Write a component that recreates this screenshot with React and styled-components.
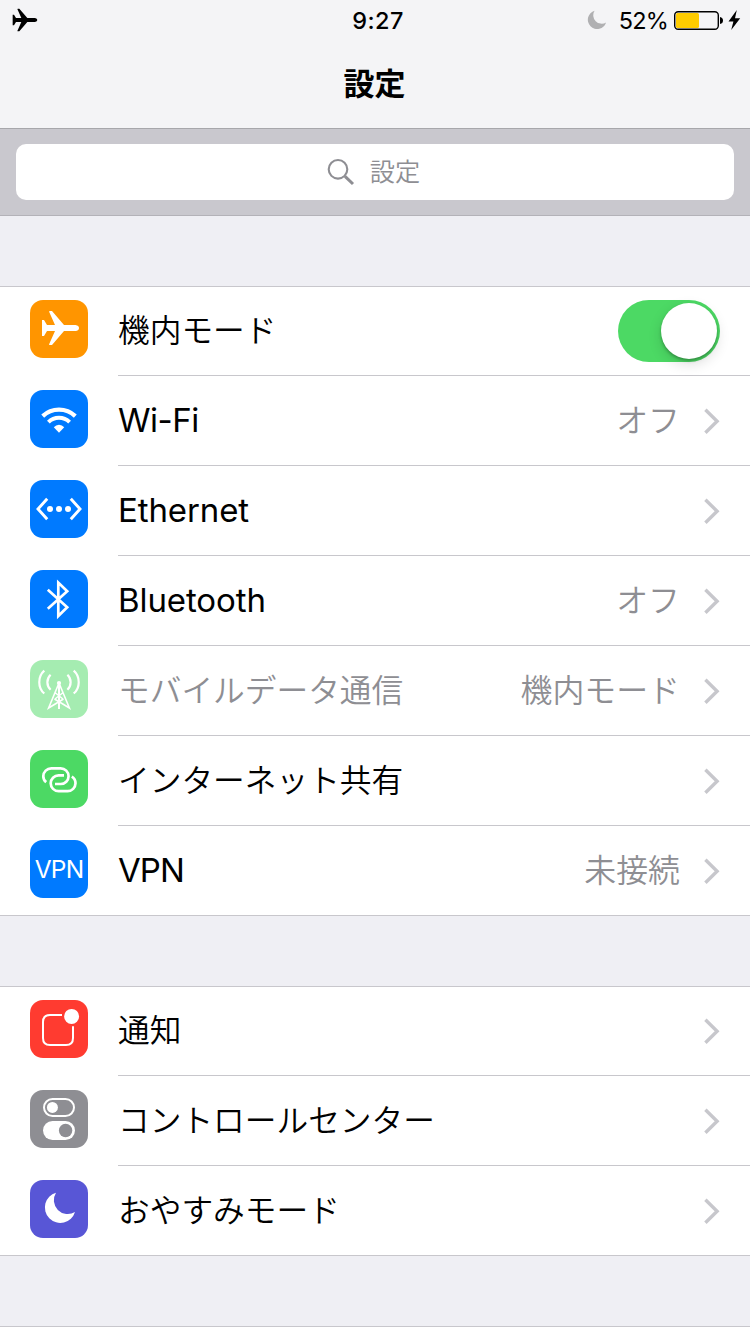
import React from 'react'
import styled, { createGlobalStyle } from 'styled-components'

const GlobalStyle = createGlobalStyle`
	* {
		box-sizing: border-box;
	}
	body {
		margin: 0;
		background-color: #efeff4;
		font-family: Inter, 'Noto Sans CJK JP', sans-serif;
		color: #000;
	}
`
const Screen = styled.div`
	width: 750px;
	height: 1334px;
	overflow: hidden;
	background-color: #efeff4;
`
const Header = styled.header`
	height: 129px;
	background-color: #f4f4f6;
	border-bottom: 1px solid #a7a7ab;
`
const StatusBar = styled.div`
	display: grid;
	grid-template-columns: 1fr auto 1fr;
	align-items: center;
	height: 40px;
	padding: 0 9px 0 12px;
`
const StatusRight = styled.div`
	display: flex;
	align-items: center;
	justify-content: flex-end;
`
const Clock = styled.div`
	height: 40px;
	font-size: 23.5px;
	font-weight: 500;
	line-height: 42px;
	letter-spacing: 0.4px;
	padding-left: 3px;
`
const Percent = styled.span`
	height: 40px;
	font-size: 23.5px;
	line-height: 42px;
	letter-spacing: -0.8px;
	margin: 0 5px 0 12px;
`
const Title = styled.h1`
	margin: 0;
	height: 88px;
	line-height: 88px;
	padding-right: 1px;
	text-align: center;
	font-size: 31px;
	font-weight: 700;
`
const SearchBar = styled.div`
	height: 87px;
	padding: 15px 16px;
	background-color: #c9c8ce;
	border-bottom: 1px solid #b3b2b8;
`
const SearchField = styled.div`
	display: flex;
	align-items: center;
	justify-content: center;
	gap: 15px;
	height: 56px;
	padding-right: 3px;
	border-radius: 10px;
	background-color: #fff;
	color: #8e8e93;
	font-size: 25.2px;
	font-weight: 350;
	line-height: 56px;
`
const Group = styled.ul`
	list-style: none;
	margin: 70px 0 0;
	padding: 0;
	background-color: #fff;
	border-top: 1px solid #c8c7cc;
	border-bottom: 1px solid #c8c7cc;
`
const Item = styled.li`
	display: flex;
	height: 90px;
	padding-left: 30px;

	&:first-child {
		margin-top: -1px;
	}
	&:last-child {
		height: 89px;
	}
`
const IconBox = styled.div`
	display: flex;
	align-items: center;
	justify-content: center;
	flex: none;
	width: 58px;
	height: 58px;
	margin: 14px 30px 0 0;
	border-radius: 13px;
	background-color: ${(props) => props.$color};
	color: #fff;
	font-size: 24.5px;
	letter-spacing: -0.8px;
`
const ItemBody = styled.div`
	display: flex;
	flex: 1;
	align-items: center;
	padding-right: 30px;
	border-bottom: 1px solid #c8c7cc;

	${Item}:last-child & {
		border-bottom: 0;
	}
`
const Label = styled.span`
	flex: 1;
	height: 88px;
	color: ${(props) => (props.$dim ? '#8e8e93' : '#000')};
	font-size: ${(props) => (props.$latin ? '33px' : '31.7px')};
	font-weight: ${(props) => (props.$latin ? 400 : 350)};
	letter-spacing: ${(props) => props.$tracking || 0}px;
	line-height: ${(props) => (props.$latin ? '86px' : '88px')};
`
const Value = styled.span`
	color: #8e8e93;
	font-size: 31.9px;
	font-weight: 350;
	line-height: 88px;
	margin-right: 24px;
`
const Toggle = styled.span`
	display: flex;
	justify-content: flex-end;
	width: 102px;
	height: 62px;
	padding: 3px;
	border-radius: 31px;
	background-color: #4cd964;
`
const Knob = styled.span`
	width: 56px;
	height: 56px;
	border-radius: 50%;
	background-color: #fff;
	box-shadow: 0 5px 14px rgba(0, 0, 0, 0.14), 0 2px 3px rgba(0, 0, 0, 0.26);
`

const Icon = ({ children }) => (
	<svg width='58' height='58' viewBox='0 0 58 58' fill='none' stroke='#fff'>
		{children}
	</svg>
)

const PLANE =
	'M12 20H14L17 25H25L19 11.5Q19.2 11 20 11H22L34 25H45.5Q49 25.5 49 28Q49 30.5 45.5 31H34L22 45H20Q19.2 45 19 44.5L25 31H17L14 36H12Z'

const AirplaneIcon = () => (
	<Icon>
		<path d={PLANE} fill='#fff' stroke='none' />
	</Icon>
)
const WifiIcon = () => (
	<Icon>
		<path d='M12.7 26.1A23.8 23.8 0 0 1 45.3 26.1' strokeWidth='4.2' />
		<path d='M18.4 32.1A15.3 15.3 0 0 1 39.6 32.1' strokeWidth='4' />
		<path d='M29 42.8L23.8 37.2Q26 34.7 29 34.7Q32 34.7 34.2 37.2Z' fill='#fff' stroke='none' />
	</Icon>
)
const EthernetIcon = () => (
	<Icon>
		<path d='M17.2 18.7L8 29L17.2 39.3M40.8 18.7L50 29L40.8 39.3' strokeWidth='2.9' />
		<g fill='#fff' stroke='none'>
			<circle cx='20' cy='29' r='3' />
			<circle cx='29' cy='29' r='3' />
			<circle cx='38' cy='29' r='3' />
		</g>
	</Icon>
)
const BluetoothIcon = () => (
	<Icon>
		<path d='M17.8 19.7L37.2 37.2L28.3 46V12.6L37.2 21.2L17.8 38.8' strokeWidth='2.7' />
	</Icon>
)
const CellularIcon = () => (
	<Icon>
		<path
			d='M14.3 10.7C7.6 16.5 7.6 27.8 14.3 33.5M43.7 10.7C50.4 16.5 50.4 27.8 43.7 33.5M20.6 14.8C16.3 18.8 16.3 25.6 20.6 29.7M37.4 14.8C41.7 18.8 41.7 25.6 37.4 29.7'
			strokeWidth='2.2'
		/>
		<path d='M28.6 24L18.6 48L33.5 39M29.4 24L39.4 48L24.5 39M25.5 33L33 39M32.5 33L25 39' strokeWidth='1.6' />
		<path d='M29 23V49' strokeWidth='2' />
		<circle cx='29' cy='23' r='2.1' fill='#fff' stroke='none' />
	</Icon>
)
const HotspotIcon = () => (
	<Icon>
		<path
			d='M16.2 32.2C14.2 30.7 13.3 28.7 13.3 26.2A8 8 0 0 1 21.3 18.3H30.7A7.85 7.85 0 0 1 30.7 34H25'
			strokeWidth='2.7'
		/>
		<path
			d='M34 25.4H28.6A7.9 7.9 0 0 0 28.6 41.2H37.6A8 8 0 0 0 45.5 33.3C45.5 30.3 44.2 28.1 41.8 26.6'
			strokeWidth='2.7'
		/>
	</Icon>
)
const NotificationIcon = () => (
	<Icon>
		<path d='M32 15H20Q13 15 13 22V38Q13 45 20 45H36Q43 45 43 38V26.3' strokeWidth='2' />
		<circle cx='41.6' cy='16.4' r='7.5' fill='#fff' stroke='none' />
	</Icon>
)
const ControlCenterIcon = () => (
	<Icon>
		<rect x='14' y='9' width='30' height='17' rx='8.5' strokeWidth='2' />
		<circle cx='22.4' cy='17.4' r='5.5' fill='#fff' stroke='none' />
		<rect x='13' y='31' width='32' height='19' rx='9.5' fill='#fff' stroke='none' />
		<circle cx='35.6' cy='40.5' r='6.7' fill='#8e8e93' stroke='none' />
	</Icon>
)
const MoonIcon = () => (
	<Icon>
		<path d='M26 12.7A15.4 15.4 0 1 0 45 32A13.9 13.9 0 0 1 26 12.7Z' fill='#fff' stroke='none' />
	</Icon>
)
const Chevron = () => (
	<svg width='16' height='26' viewBox='0 0 16 26' fill='none' stroke='#c7c7cc' strokeWidth='3.4'>
		<path d='M1.4 1.7L13.1 13.2L1.4 24.7' />
	</svg>
)

const network = [
	{ name: '機内モード', color: '#ff9500', icon: <AirplaneIcon />, toggle: true },
	{ name: 'Wi-Fi', color: '#007aff', icon: <WifiIcon />, value: 'オフ', latin: true, tracking: -0.5 },
	{ name: 'Ethernet', color: '#007aff', icon: <EthernetIcon />, latin: true, tracking: -0.1 },
	{ name: 'Bluetooth', color: '#007aff', icon: <BluetoothIcon />, value: 'オフ', latin: true, tracking: -0.1 },
	{ name: 'モバイルデータ通信', color: '#a5ecb1', icon: <CellularIcon />, value: '機内モード', dim: true },
	{ name: 'インターネット共有', color: '#4cd964', icon: <HotspotIcon /> },
	{ name: 'VPN', color: '#007aff', icon: 'VPN', value: '未接続', latin: true, tracking: -0.9 },
]
const general = [
	{ name: '通知', color: '#ff3b30', icon: <NotificationIcon /> },
	{ name: 'コントロールセンター', color: '#8e8e93', icon: <ControlCenterIcon /> },
	{ name: 'おやすみモード', color: '#5856d6', icon: <MoonIcon /> },
]

const SettingsGroup = ({ items }) => (
	<Group>
		{items.map((item) => (
			<Item key={item.name}>
				<IconBox $color={item.color}>{item.icon}</IconBox>
				<ItemBody>
					<Label $dim={item.dim} $latin={item.latin} $tracking={item.tracking}>
						{item.name}
					</Label>
					{item.value && <Value>{item.value}</Value>}
					{item.toggle ? (
						<Toggle>
							<Knob />
						</Toggle>
					) : (
						<Chevron />
					)}
				</ItemBody>
			</Item>
		))}
	</Group>
)

export default function App() {
	return (
		<Screen>
			<GlobalStyle />
			<Header>
				<StatusBar>
					<svg width='26' height='24' viewBox='11 10 39 36'>
						<path d={PLANE} />
					</svg>
					<Clock>9:27</Clock>
					<StatusRight>
						<svg width='20' height='20' viewBox='14 11.5 32 33' fill='#b0b0b2'>
							<path d='M26 12.7A15.4 15.4 0 1 0 45 32A13.9 13.9 0 0 1 26 12.7Z' />
						</svg>
						<Percent>52%</Percent>
						<svg width='68' height='22' viewBox='0 0 68 22'>
							<rect x='1.7' y='2.7' width='43.6' height='17.6' rx='3.5' fill='none' stroke='#000' strokeWidth='1.4' />
							<rect x='3' y='4' width='23' height='15' rx='1.5' fill='#fc0' />
							<path d='M47 8Q50 8.5 50 11.5Q50 14.5 47 15Z' />
							<path d='M63.8 1L55.5 12.5H60.4L58.2 21L67.2 9.3H62Z' />
						</svg>
					</StatusRight>
				</StatusBar>
				<Title>設定</Title>
			</Header>
			<SearchBar>
				<SearchField>
					<svg width='28' height='28' viewBox='0 0 28 28' fill='none' stroke='#8e8e93'>
						<circle cx='11' cy='11.3' r='9.3' strokeWidth='2.1' />
						<path d='M18 18.3L26 26' strokeWidth='3' />
					</svg>
					設定
				</SearchField>
			</SearchBar>
			<SettingsGroup items={network} />
			<SettingsGroup items={general} />
			<Group>
				<Item />
			</Group>
		</Screen>
	)
}
